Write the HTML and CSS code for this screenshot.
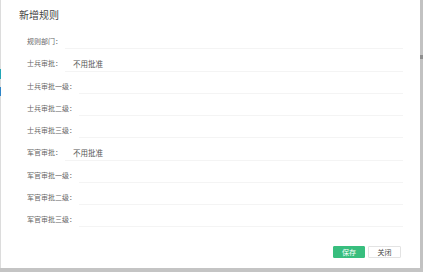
FILE: index.html
```html
<!DOCTYPE html>
<html lang="zh-CN">
<head>
    <meta charset="UTF-8">
    <meta name="viewport" content="width=device-width, initial-scale=1.0">
    <title>新增规则</title>
    <link rel="stylesheet" href="styles.css">
</head>
<body>
    <div id="page">
        <div id="edge">
            <span class="mark teal"></span>
            <span class="mark blue"></span>
        </div>

        <div id="dialog">
            <h1 id="title">新增规则</h1>

            <div id="form">
                <div class="row">
                    <label class="label">规则部门：</label>
                    <div class="field"></div>
                </div>
                <div class="row">
                    <label class="label">士兵审批：</label>
                    <div class="field">不用批准</div>
                </div>
                <div class="row">
                    <label class="label">士兵审批一级：</label>
                    <div class="field"></div>
                </div>
                <div class="row">
                    <label class="label">士兵审批二级：</label>
                    <div class="field"></div>
                </div>
                <div class="row">
                    <label class="label">士兵审批三级：</label>
                    <div class="field"></div>
                </div>
                <div class="row">
                    <label class="label">军官审批：</label>
                    <div class="field">不用批准</div>
                </div>
                <div class="row">
                    <label class="label">军官审批一级：</label>
                    <div class="field"></div>
                </div>
                <div class="row">
                    <label class="label">军官审批二级：</label>
                    <div class="field"></div>
                </div>
                <div class="row">
                    <label class="label">军官审批三级：</label>
                    <div class="field"></div>
                </div>
            </div>

            <div id="footer">
                <button id="save">保存</button>
                <button id="close">关闭</button>
            </div>
        </div>

        <div id="scroll">
            <span class="thumb"></span>
        </div>
    </div>
</body>
</html>
```

FILE: styles.css
```css
body {
	background-color: #c4c4c4;
	margin: 0;
	font-family: "Noto Sans CJK SC", "Noto Sans", sans-serif;
}

#page {
	display: flex;
	height: 268px;
}

#edge {
	width: 1px;
	background: #dcdcdc;
	display: flex;
	flex-direction: column;
}

.mark {
	display: block;
	width: 1px;
}

.teal {
	height: 10px;
	margin-top: 69px;
	background: #22a6b6;
}

.blue {
	height: 9px;
	margin-top: 8px;
	background: #2e84c6;
}

#dialog {
	width: 419px;
	background: white;
	box-sizing: border-box;
	padding: 8px 19px 0 18px;
}

#title {
	margin: 0;
	font-size: 10px;
	line-height: 14px;
	font-weight: normal;
	color: #444;
}

#form {
	margin-top: 5px;
	padding-left: 8px;
	margin-right: -2px;
}

.row {
	display: flex;
	height: 22.25px;
}

.label {
	font-size: 7px;
	line-height: 9px;
	color: #666;
	align-self: center;
	padding-top: 7px;
	margin-right: 3px;
}

.field {
	flex: 1;
	display: flex;
	align-items: center;
	padding: 7px 0 0 8px;
	border-bottom: 1px solid #f4f4f4;
	font-size: 7.5px;
	color: #555;
}

#footer {
	display: flex;
	justify-content: flex-end;
	gap: 3px;
	margin-top: 19px;
}

button {
	height: 12px;
	padding: 0;
	border: 1px solid #e3e3e3;
	border-radius: 1px;
	background: white;
	font-family: inherit;
	font-size: 7px;
	line-height: 10px;
	color: #444;
}

#save {
	width: 32px;
	background: #38be7e;
	border-color: #38be7e;
	color: white;
}

#close {
	width: 33px;
}

#scroll {
	width: 3px;
	background: #c2c2c2;
}

.thumb {
	display: block;
	height: 4px;
	margin-top: 55px;
	background: #8e8e8e;
}
```
